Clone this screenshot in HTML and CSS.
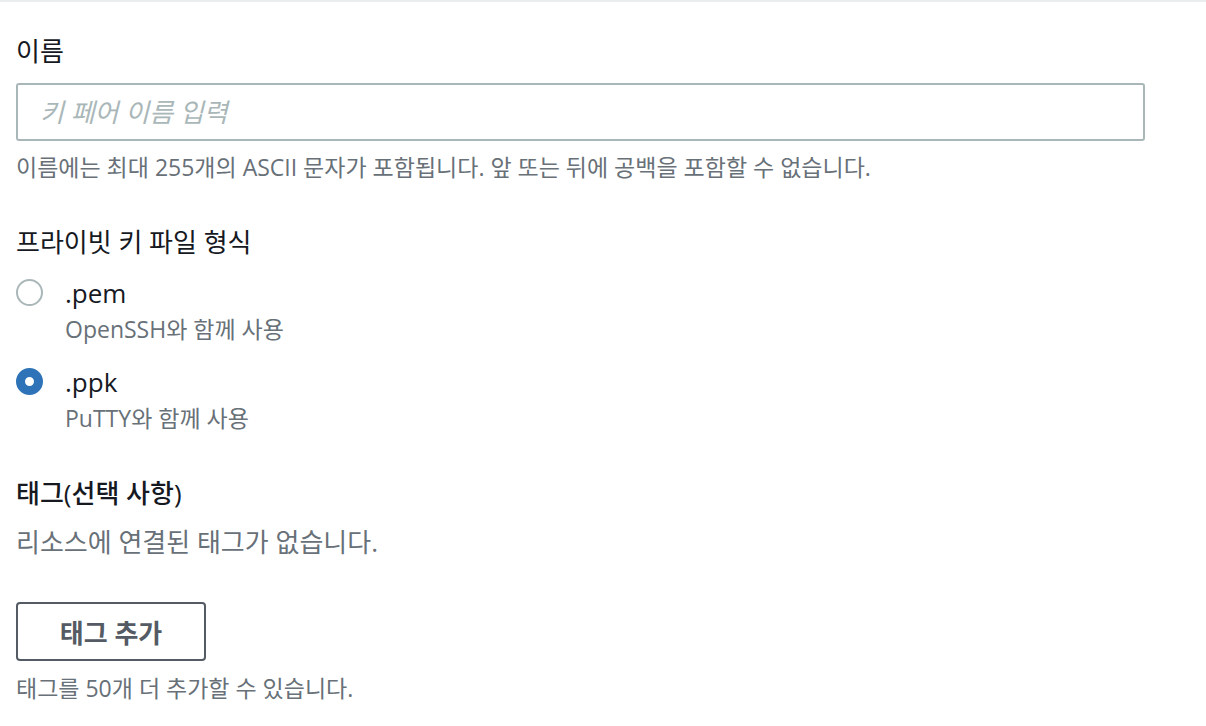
FILE: index.html
```html
<!DOCTYPE html>
<html lang="ko">
<head>
<meta charset="utf-8">
<link rel="stylesheet" href="styles.css">
</head>
<body>
<div class="topline"></div>
<main class="form">
  <section class="field field-name">
    <label class="label" for="kp">이름</label>
    <div class="input-box"><input id="kp" class="input" type="text" placeholder="키 페어 이름 입력"></div>
    <p class="hint">이름에는 최대 255개의 ASCII 문자가 포함됩니다. 앞 또는 뒤에 공백을 포함할 수 없습니다.</p>
  </section>

  <section class="field field-format">
    <div class="label">프라이빗 키 파일 형식</div>
    <div class="radio-group">
      <div class="radio">
        <span class="dot"></span>
        <div class="radio-text">
          <div class="radio-title">.pem</div>
          <div class="radio-desc">OpenSSH와 함께 사용</div>
        </div>
      </div>
      <div class="radio">
        <span class="dot checked"></span>
        <div class="radio-text">
          <div class="radio-title">.ppk</div>
          <div class="radio-desc">PuTTY와 함께 사용</div>
        </div>
      </div>
    </div>
  </section>

  <section class="field field-tags">
    <div class="label label-strong">태그(선택 사항)</div>
    <p class="empty">리소스에 연결된 태그가 없습니다.</p>
    <button class="btn" type="button">태그 추가</button>
    <p class="hint hint-tags">태그를 50개 더 추가할 수 있습니다.</p>
  </section>
</main>
</body>
</html>
```

FILE: styles.css
```css
* { box-sizing: border-box; }
html, body { margin: 0; padding: 0; background: #fff; }
body {
  font-family: "Open Sans", "Noto Sans CJK KR", sans-serif;
  color: #16191f;
  width: 1206px;
  height: 726px;
  overflow: hidden;
}
.topline { height: 2px; background: #eaeded; }
.form { padding: 0 61px 0 16px; }
p { margin: 0; }

.label {
  display: block;
  font-size: 26px;
  line-height: 32px;
  color: #16191f;
}
.label-strong { font-weight: 500; }

.field-name { padding-top: 33px; }
.input-box { margin-top: 16px; }
.input {
  display: block;
  width: 100%;
  height: 58px;
  border: 2px solid #aab7b8;
  border-radius: 3px;
  padding: 0 22px;
  font-family: "Open Sans", "Noto Sans CJK KR", sans-serif;
  font-size: 26px;
  color: #16191f;
  outline: none;
}
.input::placeholder { color: #aab7b8; font-style: italic; }
.hint {
  margin-top: 11px;
  font-size: 23px;
  line-height: 30px;
  color: #687078;
}

.field-format { margin-top: 44px; }
.radio-group { display: flex; flex-direction: column; gap: 22px; margin-top: 19px; }
.radio { display: flex; align-items: flex-start; gap: 22px; }
.dot {
  flex: none;
  width: 27px;
  height: 27px;
  margin-top: 2px;
  border: 2px solid #aab7b8;
  border-radius: 50%;
  background: #fff;
}
.dot.checked {
  border: 9px solid #2e73b8;
}
.radio-title { font-size: 26px; line-height: 32px; color: #16191f; }
.radio-desc { font-size: 23px; line-height: 30px; color: #687078; margin-top: 5px; }

.field-tags { margin-top: 44px; }
.empty { margin-top: 17px; font-size: 26px; line-height: 32px; color: #687078; }
.btn {
  display: flex;
  align-items: center;
  justify-content: center;
  margin-top: 44px;
  width: 190px;
  height: 59px;
  border: 2px solid #545b64;
  border-radius: 4px;
  background: #fff;
  color: #545b64;
  font-family: "Open Sans", "Noto Sans CJK KR", sans-serif;
  font-size: 26px;
  font-weight: 700;
  padding: 0;
}
.hint-tags { margin-top: 12px; }
```
